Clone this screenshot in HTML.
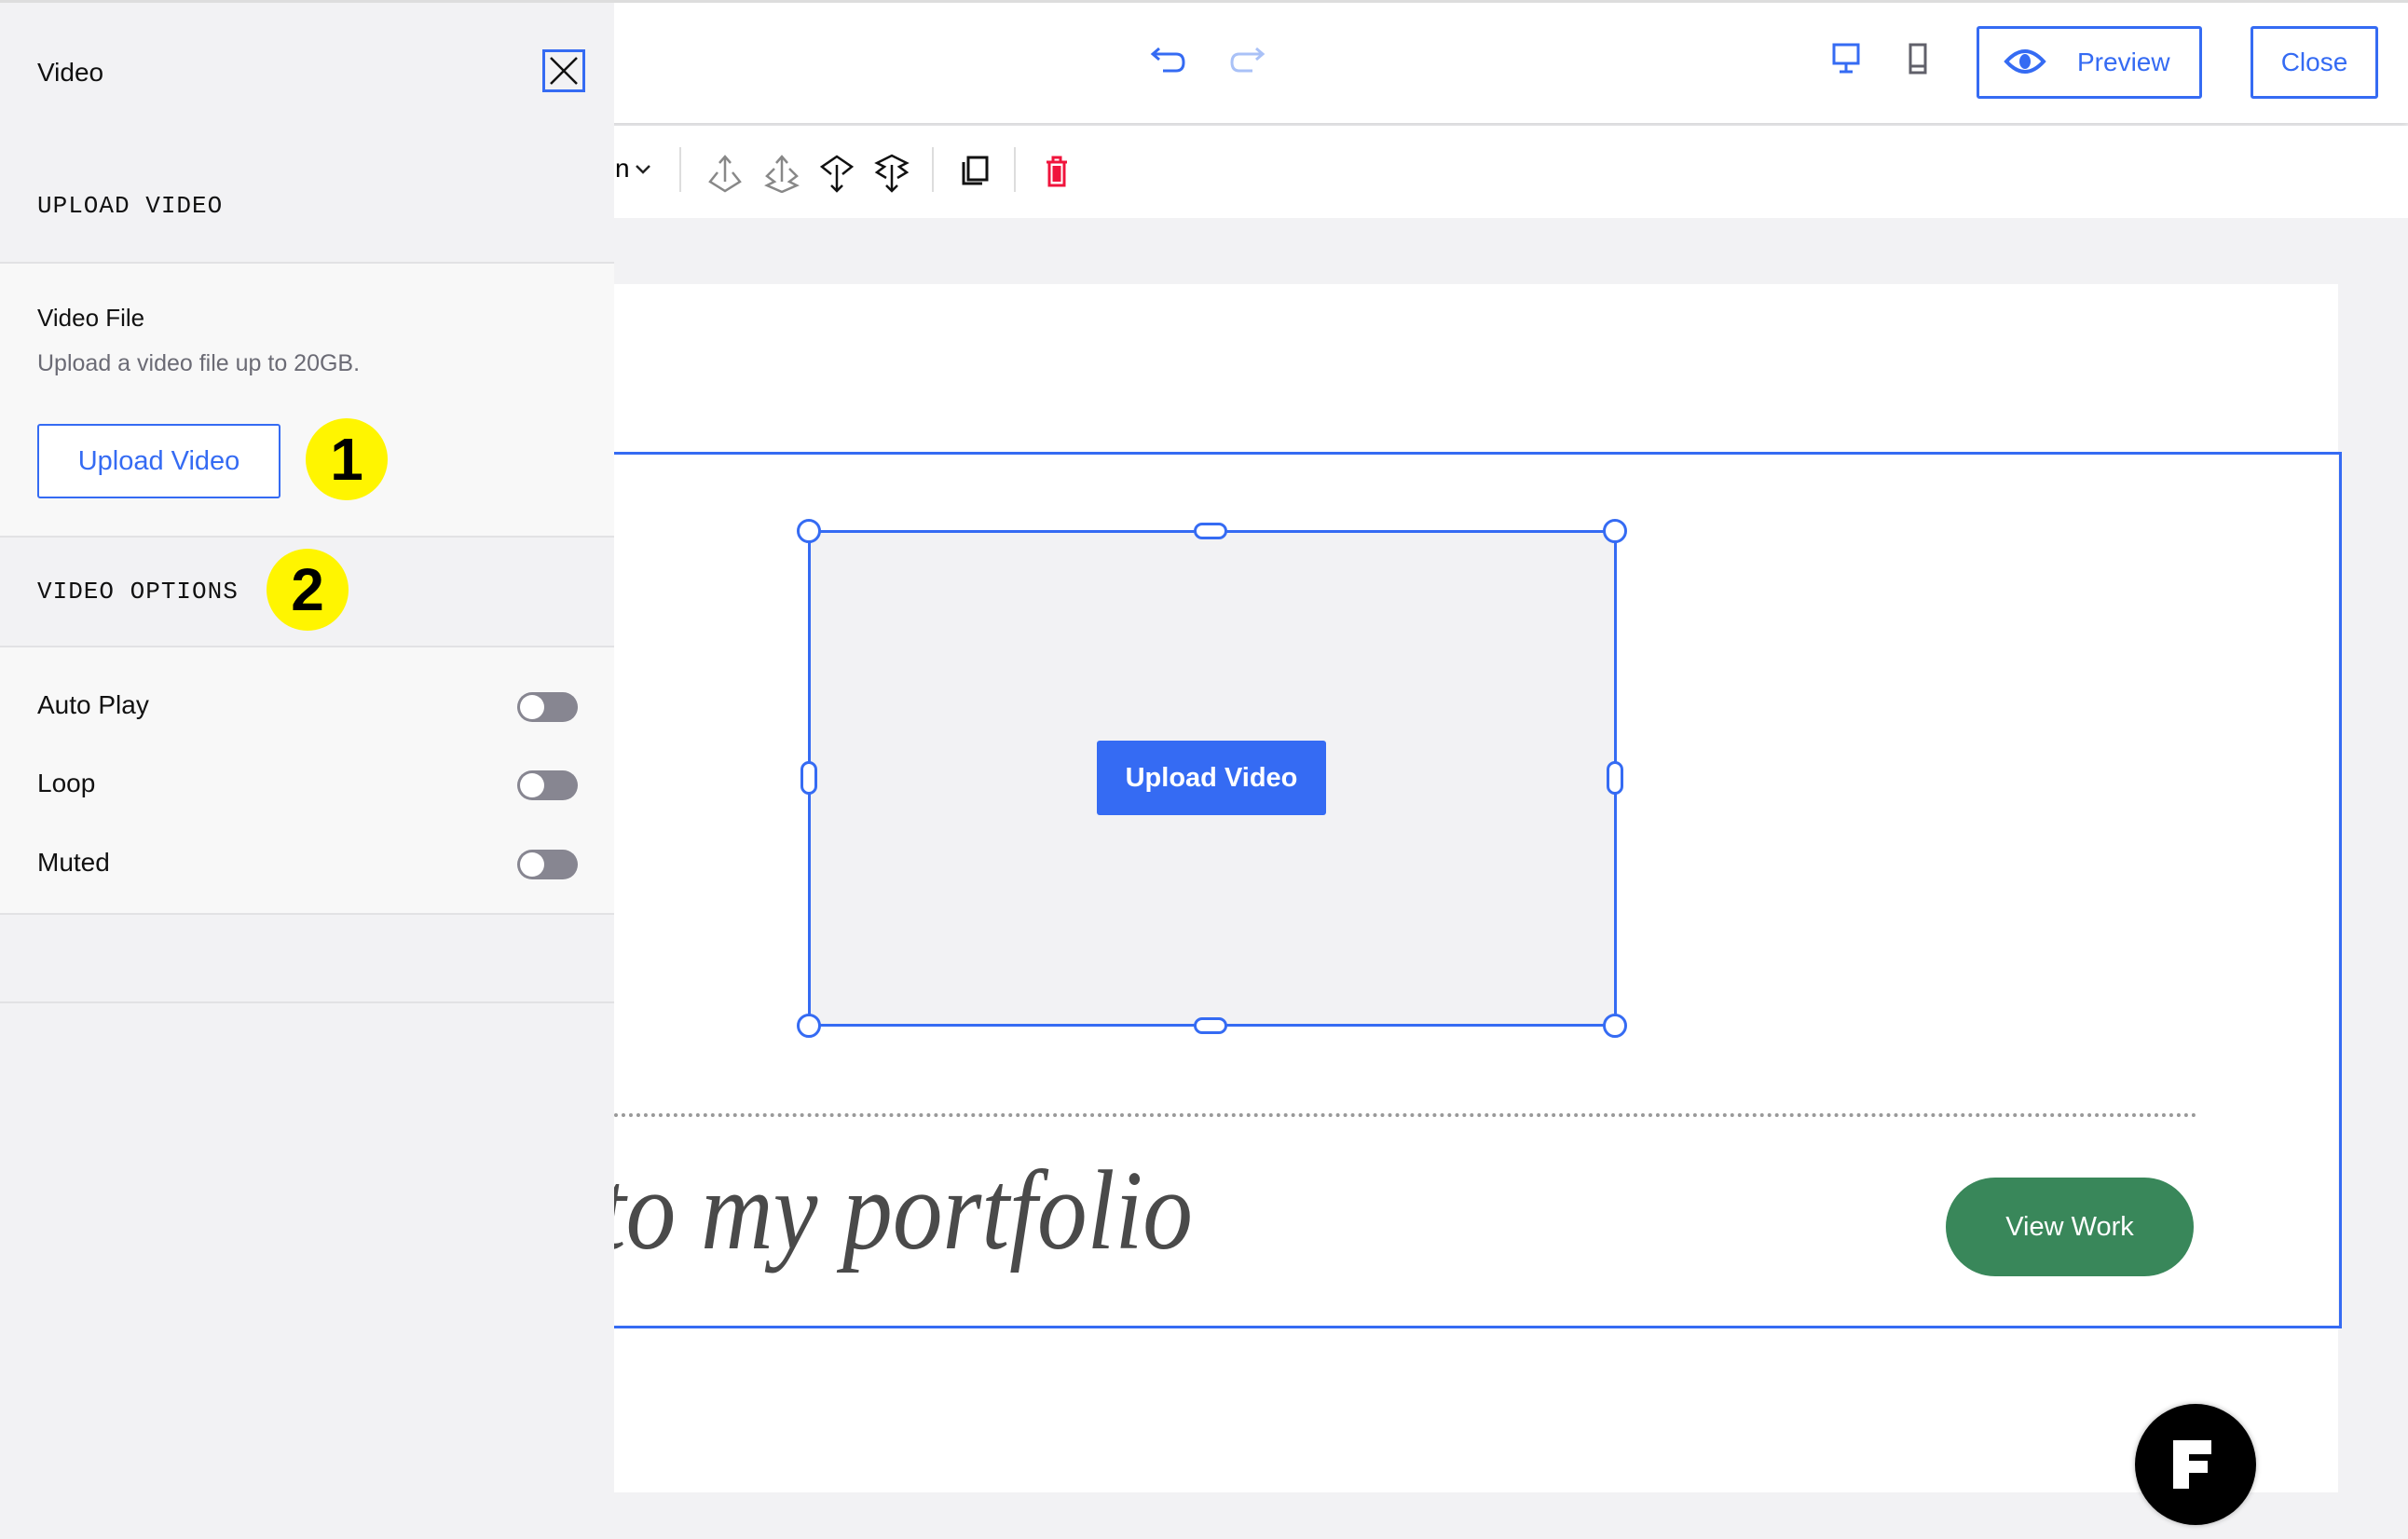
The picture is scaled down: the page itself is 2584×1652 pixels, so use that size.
<!DOCTYPE html>
<html><head><meta charset="utf-8"><style>
*{box-sizing:border-box;margin:0;padding:0}
body{width:2584px;height:1652px;overflow:hidden;background:#f2f2f4;font-family:"Liberation Sans",sans-serif;position:relative}
.a{position:absolute}
.blue{color:#356bf3}
</style></head><body>
<!-- top bar -->
<div class="a" style="left:0;top:0;width:2584px;height:132px;background:#fff;border-top:3px solid #ddd;box-shadow:0 3px 6px rgba(0,0,0,.12)"></div>
<div class="a" style="left:0;top:135px;width:2584px;height:99px;background:#fff"></div>
<!-- undo redo -->
<svg class="a" style="left:1234px;top:48px" width="40" height="32" viewBox="0 0 40 32" fill="none" stroke="#356bf3" stroke-width="3"><path d="M10 4 L3 10 L10 16 M3 10 H28 Q36 10 36 19 Q36 28 28 28 H14"/></svg>
<svg class="a" style="left:1318px;top:48px" width="40" height="32" viewBox="0 0 40 32" fill="none" stroke="#a9c1f7" stroke-width="3"><path d="M30 4 L37 10 L30 16 M37 10 H12 Q4 10 4 19 Q4 28 12 28 H26"/></svg>
<!-- desktop / mobile -->
<svg class="a" style="left:1964px;top:46px" width="34" height="34" viewBox="0 0 34 34" fill="none" stroke="#356bf3" stroke-width="3"><rect x="4" y="2" width="26" height="20"/><path d="M17 22V31M10 31H24"/></svg>
<svg class="a" style="left:2046px;top:46px" width="24" height="34" viewBox="0 0 24 34" fill="none" stroke="#60606a" stroke-width="3"><rect x="4" y="2" width="16" height="30"/><path d="M4 25H20"/></svg>
<!-- preview / close -->
<div class="a blue" style="left:2121px;top:28px;width:242px;height:78px;border:3px solid #356bf3;border-radius:3px;font-size:28px;line-height:72px;padding-left:105px">Preview</div>
<svg class="a" style="left:2150px;top:50px" width="46" height="32" viewBox="0 0 46 32"><path d="M3 16 Q23 -6 43 16 Q23 38 3 16Z" fill="none" stroke="#356bf3" stroke-width="4"/><ellipse cx="23" cy="16" rx="6" ry="8" fill="#356bf3"/></svg>
<div class="a blue" style="left:2415px;top:28px;width:137px;height:78px;border:3px solid #356bf3;border-radius:3px;font-size:28px;line-height:72px;text-align:center">Close</div>
<!-- toolbar -->
<div class="a" style="left:660px;top:165px;font-size:28px">n</div>
<svg class="a" style="left:680px;top:175px" width="20" height="14" viewBox="0 0 20 14" fill="none" stroke="#222" stroke-width="2.5"><path d="M3 3L10 10L17 3"/></svg>
<div class="a" style="left:729px;top:158px;width:2px;height:48px;background:#ddd"></div>
<div class="a" style="left:1000px;top:158px;width:2px;height:48px;background:#ddd"></div>
<div class="a" style="left:1088px;top:158px;width:2px;height:48px;background:#ddd"></div>
<svg class="a" style="left:758px;top:165px" width="40" height="42" viewBox="0 0 40 42" fill="none" stroke="#888" stroke-width="2.5"><path d="M20 4V30M14 10L20 3L26 10M12 20L4 30L20 40L36 30L28 20"/></svg>
<svg class="a" style="left:819px;top:165px" width="40" height="42" viewBox="0 0 40 42" fill="none" stroke="#888" stroke-width="2.5"><path d="M20 4V30M14 10L20 3L26 10M12 16L4 24L12 30L4 34L20 41L36 34L28 30L36 24L28 16"/></svg>
<svg class="a" style="left:878px;top:165px" width="40" height="42" viewBox="0 0 40 42" fill="none" stroke="#111" stroke-width="2.5"><path d="M20 12V40M14 34L20 40L26 34M14 22L4 14L20 3L36 14L26 22"/></svg>
<svg class="a" style="left:937px;top:165px" width="40" height="42" viewBox="0 0 40 42" fill="none" stroke="#111" stroke-width="2.5"><path d="M20 12V40M14 34L20 40L26 34M14 26L4 20L12 14L4 10L20 2L36 10L28 14L36 20L26 26"/></svg>
<svg class="a" style="left:1030px;top:166px" width="32" height="34" viewBox="0 0 32 34" fill="none" stroke="#111" stroke-width="3"><rect x="9" y="3" width="20" height="24"/><path d="M4 8V31H24"/></svg>
<svg class="a" style="left:1120px;top:166px" width="28" height="36" viewBox="0 0 28 36" fill="none" stroke="#f0143c" stroke-width="3"><path d="M3 8H25M10 8V3H18V8M6 8V33H22V8M11 12V29M14 12V29M17 12V29"/></svg>
<!-- page -->
<div class="a" style="left:659px;top:305px;width:1850px;height:1297px;background:#fff"></div>
<div class="a" style="left:640px;top:485px;width:1873px;height:941px;border:3px solid #356bf3"></div>
<div class="a" style="left:659px;top:1195px;width:1699px;border-top:4px dotted #999"></div>
<div class="a" style="left:280px;top:1230px;width:1000px;text-align:right;transform:scaleX(0.88);transform-origin:right center;font-family:'Liberation Serif',serif;font-style:italic;font-size:122px;color:#4a4a4a;white-space:nowrap">to my portfolio</div>
<div class="a" style="left:2088px;top:1264px;width:266px;height:106px;border-radius:53px;background:#39875a;color:#fff;font-size:29px;line-height:106px;text-align:center">View Work</div>
<div class="a" style="left:2291px;top:1507px;width:130px;height:130px;border-radius:50%;background:#000;box-shadow:0 0 6px rgba(0,0,0,.3)"></div>
<svg class="a" style="left:2329px;top:1543px" width="50" height="58" viewBox="0 0 50 58"><path d="M3 3H44V18H20V25H40V38H20V55H3Z" fill="#fff"/></svg>
<!-- video box -->
<div class="a" style="left:867px;top:569px;width:868px;height:533px;background:#f2f2f4;border:3px solid #356bf3"></div>
<div class="a" style="left:1177px;top:795px;width:246px;height:80px;background:#356bf3;border-radius:3px;color:#fff;font-size:29px;font-weight:bold;line-height:80px;text-align:center">Upload Video</div>
<div class="a" style="left:855px;top:557px;width:26px;height:26px;border:3px solid #356bf3;border-radius:50%;background:#fff"></div>
<div class="a" style="left:1720px;top:557px;width:26px;height:26px;border:3px solid #356bf3;border-radius:50%;background:#fff"></div>
<div class="a" style="left:855px;top:1088px;width:26px;height:26px;border:3px solid #356bf3;border-radius:50%;background:#fff"></div>
<div class="a" style="left:1720px;top:1088px;width:26px;height:26px;border:3px solid #356bf3;border-radius:50%;background:#fff"></div>
<div class="a" style="left:1281px;top:561px;width:36px;height:18px;border:3px solid #356bf3;border-radius:9px;background:#fff"></div>
<div class="a" style="left:1281px;top:1092px;width:36px;height:18px;border:3px solid #356bf3;border-radius:9px;background:#fff"></div>
<div class="a" style="left:859px;top:817px;width:18px;height:36px;border:3px solid #356bf3;border-radius:9px;background:#fff"></div>
<div class="a" style="left:1724px;top:817px;width:18px;height:36px;border:3px solid #356bf3;border-radius:9px;background:#fff"></div>
<!-- sidebar -->
<div class="a" style="left:0;top:0;width:659px;height:1652px;background:#f2f2f4;border-top:3px solid #ddd"></div>
<div class="a" style="left:40px;top:62px;font-size:28px;color:#111">Video</div>
<div class="a" style="left:582px;top:53px;width:46px;height:46px;border:3px solid #356bf3"></div>
<svg class="a" style="left:588px;top:59px" width="34" height="34" viewBox="0 0 34 34" stroke="#111" stroke-width="2.5"><path d="M3 3L31 31M31 3L3 31"/></svg>
<div class="a" style="left:40px;top:206px;font-family:'Liberation Mono',monospace;font-size:26px;letter-spacing:1px;color:#111">UPLOAD VIDEO</div>
<div class="a" style="left:0;top:281px;width:659px;height:414px;background:#f8f8f8;border-top:2px solid #e2e2e4;border-bottom:2px solid #e2e2e4"></div>
<div class="a" style="left:0;top:575px;width:659px;height:120px;background:#f2f2f4;border-top:2px solid #e2e2e4;border-bottom:2px solid #e2e2e4"></div>
<div class="a" style="left:40px;top:326px;font-size:26px;color:#111">Video File</div>
<div class="a" style="left:40px;top:376px;font-size:25px;color:#6b6b75">Upload a video file up to 20GB.</div>
<div class="a blue" style="left:40px;top:455px;width:261px;height:80px;border:2px solid #356bf3;border-radius:3px;background:#fff;font-size:29px;line-height:76px;text-align:center">Upload Video</div>
<div class="a" style="left:328px;top:449px;width:88px;height:88px;border-radius:50%;background:#fff500;font-size:64px;font-weight:bold;text-align:center;line-height:88px">1</div>
<div class="a" style="left:40px;top:620px;font-family:'Liberation Mono',monospace;font-size:26px;letter-spacing:1px;color:#111">VIDEO OPTIONS</div>
<div class="a" style="left:286px;top:589px;width:88px;height:88px;border-radius:50%;background:#fff500;font-size:64px;font-weight:bold;text-align:center;line-height:88px">2</div>
<div class="a" style="left:0;top:695px;width:659px;height:287px;background:#f8f8f8;border-bottom:2px solid #e2e2e4"></div>
<div class="a" style="left:40px;top:741px;font-size:28px;color:#111">Auto Play</div>
<div class="a" style="left:40px;top:825px;font-size:28px;color:#111">Loop</div>
<div class="a" style="left:40px;top:910px;font-size:28px;color:#111">Muted</div>
<div class="a" style="left:555px;top:743px;width:65px;height:32px;border-radius:16px;background:#878691"><div class="a" style="left:3px;top:3px;width:26px;height:26px;border-radius:50%;background:#fff"></div></div>
<div class="a" style="left:555px;top:827px;width:65px;height:32px;border-radius:16px;background:#878691"><div class="a" style="left:3px;top:3px;width:26px;height:26px;border-radius:50%;background:#fff"></div></div>
<div class="a" style="left:555px;top:912px;width:65px;height:32px;border-radius:16px;background:#878691"><div class="a" style="left:3px;top:3px;width:26px;height:26px;border-radius:50%;background:#fff"></div></div>
<div class="a" style="left:0;top:1075px;width:659px;border-top:2px solid #e2e2e4"></div>
</body></html>
